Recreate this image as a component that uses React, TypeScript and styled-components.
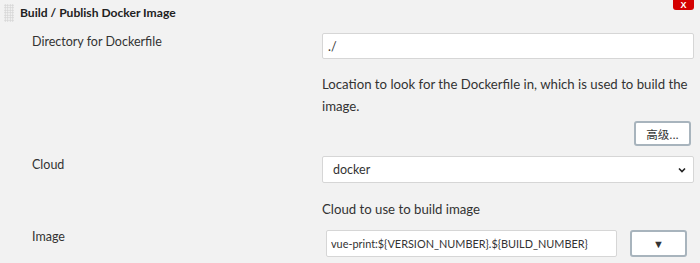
import React from "react";
import styled, { createGlobalStyle } from "styled-components";

const GlobalStyle = createGlobalStyle`
  html, body {
    margin: 0;
    padding: 0;
    background: #f2f2f2;
    font-family: Lato, "Open Sans", sans-serif;
    color: #333;
  }
`;

const Section = styled.div`
  width: 700px;
  height: 263px;
  overflow: hidden;
  background: #f2f2f2;
`;

const Header = styled.div`
  display: flex;
  align-items: flex-start;
  height: 28px;
`;

const Grip = styled.div`
  width: 10px;
  height: 18px;
  margin: 4px 0 0 4px;
  background-image: radial-gradient(circle, #d4d4d4 0.8px, transparent 1px);
  background-size: 2.5px 2.5px;
`;

const Title = styled.div`
  margin: 5px 0 0 6px;
  font-size: 12.1px;
  font-weight: 700;
  color: #222;
  flex: 1;
`;

const CloseBtn = styled.button`
  width: 21px;
  height: 16px;
  margin: -6px 6px 0 0;
  padding: 6px 0 0;
  border: none;
  border-radius: 3px;
  background: #d40000;
  color: #fff;
  font: 700 9px "Liberation Sans", sans-serif;
  line-height: 9px;
`;

const Grid = styled.div`
  display: grid;
  grid-template-columns: 290px 372px;
  padding-left: 32px;
`;

const Label = styled.div<{ $top: number }>`
  font-size: 12.5px;
  color: #333;
  padding-top: ${(p) => p.$top}px;
`;

const Field = styled.div<{ $top: number }>`
  display: flex;
  flex-direction: column;
  padding-top: ${(p) => p.$top}px;
`;

const TextInput = styled.input`
  box-sizing: border-box;
  height: 26px;
  width: 100%;
  border: 1px solid #d6d6d6;
  border-radius: 2px;
  background: #fff;
  padding: 0 8px 0 5px;
  font-family: Lato, "Open Sans", sans-serif;
  font-size: 12.5px;
  color: #333;
  outline: none;
`;

const Help = styled.div<{ $pad: string }>`
  font-size: 13.2px;
  line-height: 22px;
  color: #333;
  padding: ${(p) => p.$pad};
`;

const BtnRow = styled.div`
  display: flex;
  justify-content: flex-end;
  padding-right: 3px;
`;

const AdvBtn = styled.button`
  box-sizing: border-box;
  width: 57px;
  height: 25px;
  border: 2px solid #a8b4bd;
  border-radius: 3px;
  background: #fff;
  font-family: "Noto Sans CJK SC", Lato, sans-serif;
  font-size: 11.5px;
  color: #333;
  padding: 0;
`;

const SelectBox = styled.div`
  box-sizing: border-box;
  height: 27px;
  border: 1px solid #d6d6d6;
  border-radius: 2px;
  background: #fff;
  display: flex;
  align-items: center;
  justify-content: space-between;
  padding: 0 6px 0 10px;
  font-size: 12.5px;
  color: #333;
`;

const ImageRow = styled.div`
  display: flex;
  align-items: center;
  gap: 13px;
  padding-left: 4px;
`;

const ImageInput = styled(TextInput)`
  width: 291px;
  height: 27px;
  padding-left: 4px;
  font-size: 10.9px;
`;

const DropBtn = styled.button`
  box-sizing: border-box;
  width: 57px;
  height: 27px;
  border: 2px solid #a8b4bd;
  border-radius: 3px;
  background: #fff;
  font-size: 11px;
  color: #333;
  padding: 0;
  margin-top: 1px;
`;

export default function App() {
  return (
    <Section>
      <GlobalStyle />
      <Header>
        <Grip />
        <Title>Build / Publish Docker Image</Title>
        <CloseBtn>X</CloseBtn>
      </Header>
      <Grid>
        <Label $top={6}>Directory for Dockerfile</Label>
        <Field $top={5}>
          <TextInput defaultValue="./" />
          <Help $pad="14px 0 4px">
            Location to look for the Dockerfile in, which is used to build the image.
          </Help>
          <BtnRow>
            <AdvBtn>高级...</AdvBtn>
          </BtnRow>
        </Field>
        <Label $top={11}>Cloud</Label>
        <Field $top={10}>
          <SelectBox>
            <span>docker</span>
            <svg width="10" height="10" viewBox="0 0 10 10">
              <path d="M2 3.5 L5 6.5 L8 3.5" fill="none" stroke="#222" strokeWidth="1.6" />
            </svg>
          </SelectBox>
          <Help $pad="15px 0 9px">Cloud to use to build image</Help>
        </Field>
        <Label $top={0}>Image</Label>
        <Field $top={0}>
          <ImageRow>
            <ImageInput defaultValue="vue-print:${VERSION_NUMBER}.${BUILD_NUMBER}" />
            <DropBtn>▼</DropBtn>
          </ImageRow>
        </Field>
      </Grid>
    </Section>
  );
}
